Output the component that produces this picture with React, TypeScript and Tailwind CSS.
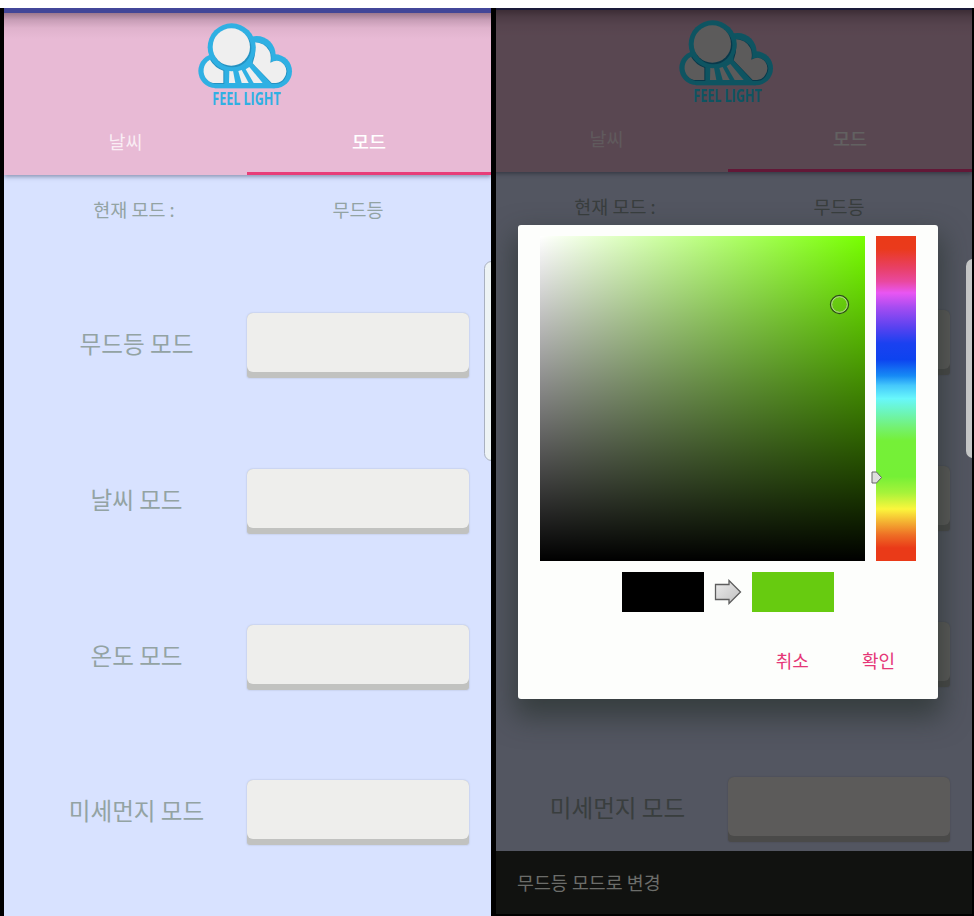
import React from "react";

const MODES = ["무드등 모드", "날씨 모드", "온도 모드", "미세먼지 모드"];

function Logo({ dimmed }: { dimmed: boolean }) {
  const blue = dimmed ? "#22dcff" : "#2fb0e3";
  const edge = dimmed ? "#1496c4" : "#2492c2";
  return (
    <svg className="overflow-visible" width="98" height="104" viewBox="50 54 294 312" aria-label="Feel Light">
      <g fill={blue}>
        <circle cx="108" cy="213" r="51" />
        <circle cx="287" cy="214" r="51" />
        <circle cx="232" cy="165" r="57" />
        <rect x="106" y="165" width="180" height="100" />
      </g>
      <g fill={edge}>
        <path d="M95 179A39 39 0 0 0 106 252H135V204Q110 192 98 177Z" />
        <path d="M222 127Q260 126 273 155Q278 168 275 186Q301 174 318 197Q331 216 316 238Q307 251 292 252H277L219 190Z" />
      </g>
      <g fill="#efefef">
        <path d="M92 179C70 190 66 222 84 239Q93 249 108 249H132V212Q106 203 92 179Z" />
        <path d="M226 127Q256 128 270 153Q277 167 273 188Q298 173 315 195Q328 214 314 235Q306 248 290 249H277L220 190Q232 160 226 127Z" />
        <path d="M150 212H161L168 249H149Z" />
        <path d="M177 213L187 210L208 249H187Z" />
        <path d="M199 208L210 201L250 249H223Z" />
      </g>
      <circle cx="157" cy="142" r="72" fill={blue} />
      <circle cx="159" cy="145" r="57" fill={edge} />
      <circle cx="156" cy="141" r="56" fill="#efefef" />
      <text
        x="99"
        y="316"
        textLength="205"
        lengthAdjust="spacingAndGlyphs"
        fill={blue}
        fontSize="53"
        fontWeight="700"
        fontFamily="'Open Sans', 'Noto Sans', sans-serif"
      >
        FEEL LIGHT
      </text>
    </svg>
  );
}

function ModeScreen({ dimmed = false }: { dimmed?: boolean }) {
  return (
    <div className="flex h-[914px] w-[487px] flex-col bg-[#d8e2ff]">
      <div className="h-[5px] shrink-0 bg-[#43479a]" />
      <header className="flex h-[162px] shrink-0 flex-col items-center bg-[#e8bad5] bg-[linear-gradient(to_bottom,#9c778d_0px,#c79db6_7px,#dfb2cc_15px,#e8bad5_26px)] shadow-[0_2px_4px_rgba(70,80,110,0.5)]">
        <div className="h-[113px] pt-[5px] pr-[5px]">
          <Logo dimmed={dimmed} />
        </div>
        <nav className="grid h-[49px] w-full grid-cols-[243px_244px] text-center text-[18.5px] leading-[30px] text-white">
          <div className="text-white/75">날씨</div>
          <div className={`border-b-[3px] font-medium ${dimmed ? "border-[#ff4190]" : "border-[#e83d78]"}`}>모드</div>
        </nav>
      </header>
      <main className="flex flex-col px-[22px] text-[#93a3a3]">
        <div className="grid h-[138.2px] grid-cols-[221px_222px] pt-[19px] text-center text-[18.5px] leading-[30px]">
          <div className="whitespace-pre pr-[5px]">현재 모드 :</div>
          <div>무드등</div>
        </div>
        {MODES.map((mode) => (
          <div key={mode} className="grid h-[155.7px] grid-cols-[221px_222px]">
            <div className="text-center text-[23.6px] leading-[60px]">{mode}</div>
            <button className="h-[65px] rounded-t-[6px] rounded-b-[3px] bg-[#c1c2c0] pb-[6px] shadow-[0_0_1px_1px_rgba(180,190,215,0.35)]">
              <span className="block h-[59px] rounded-[6px] bg-[#eeeeec]" />
            </button>
          </div>
        ))}
      </main>
    </div>
  );
}

function ColorPicker() {
  return (
    <div className="flex h-[474px] w-[420px] flex-col rounded-[3px] bg-[#fdfefc] px-[22px] pt-[11px] shadow-[0_14px_28px_4px_rgba(35,45,40,0.6)]">
      <div className="flex gap-[11px]">
        <div className="relative size-[325px] bg-[linear-gradient(to_bottom,transparent,#000),linear-gradient(to_right,#fff,#77ff00)]">
          <svg className="absolute top-[58px] left-[289px]" width="21" height="21">
            <circle cx="10.5" cy="10.5" r="9" fill="none" stroke="#2f4a1c" strokeWidth="1.3" />
            <circle cx="10.5" cy="10.5" r="7.8" fill="none" stroke="#b9d99c" strokeWidth="1" />
          </svg>
        </div>
        <div className="relative h-[325px] w-[40px] bg-[linear-gradient(to_bottom,#ea3a18_0%,#ea3a1c_4%,#e84068_10%,#e9489f_14%,#e956f3_17.5%,#a54cf1_22%,#5a42f0_28%,#1b41f0_33%,#0d43ef_38%,#168af5_43%,#45c8fb_46%,#68f7fb_50%,#6cf5be_54%,#74f170_59%,#75f038_63%,#75f036_74%,#a6f33a_79%,#fbf63c_84%,#f4b132_88%,#ee6e25_92%,#ea3a18_96%)]">
          <svg className="absolute top-[235px] left-[-5px]" width="12" height="13">
            <path d="M1 1H5.5L10.5 6.5L5.5 12H1Z" fill="#dedede" stroke="#656565" />
          </svg>
        </div>
      </div>
      <div className="mt-[11px] ml-[82px] flex h-[40px] items-center">
        <div className="h-full w-[82px] bg-black" />
        <svg className="mx-[10px]" width="28" height="26">
          <defs>
            <linearGradient id="arrow" x2="1" y2="1">
              <stop stopColor="#ededed" />
              <stop offset="1" stopColor="#bfbfbf" />
            </linearGradient>
          </defs>
          <path d="M1.5 5.5H15V1.5L26.5 13L15 24.5V20.5H1.5Z" fill="url(#arrow)" stroke="#5d5d5d" strokeWidth="1.3" />
        </svg>
        <div className="h-full w-[82px] bg-[#67cb10]" />
      </div>
      <div className="mt-[33px] flex justify-end gap-[53px] pr-[21px] text-[18px] leading-[30px] text-[#e53777]">
        <button>취소</button>
        <button>확인</button>
      </div>
    </div>
  );
}

export default function App() {
  return (
    <div className="h-[916px] w-[974px] overflow-hidden bg-white pt-2 font-['Noto_Sans_CJK_KR',sans-serif]">
      <div className="flex h-[908px] gap-[5px] bg-black pr-[2px] pl-[4px]">
        <section className="relative h-[908px] w-[487px] overflow-hidden">
          <ModeScreen />
          <div className="absolute top-[253px] right-[-8px] h-[200px] w-[15px] rounded-[8px] border border-[#a9b1c0] bg-[#edf3f5]" />
        </section>
        <section className="relative h-[906px] w-[476px] overflow-hidden">
          <div className="-mt-[3px] -ml-[11px]">
            <ModeScreen dimmed />
          </div>
          <div className="absolute inset-0 bg-[#020000]/62" />
          <footer className="absolute inset-x-0 bottom-0 h-[63px] bg-[#111210] pl-[21px] text-[18.4px] leading-[63px] text-[#6c6d6a]">
            무드등 모드로 변경
          </footer>
          <div className="absolute top-[251px] right-[-8px] h-[199px] w-[14px] rounded-[8px] bg-[#c7c9c9]" />
          <div className="absolute top-[217px] left-[22px]">
            <ColorPicker />
          </div>
        </section>
      </div>
    </div>
  );
}
